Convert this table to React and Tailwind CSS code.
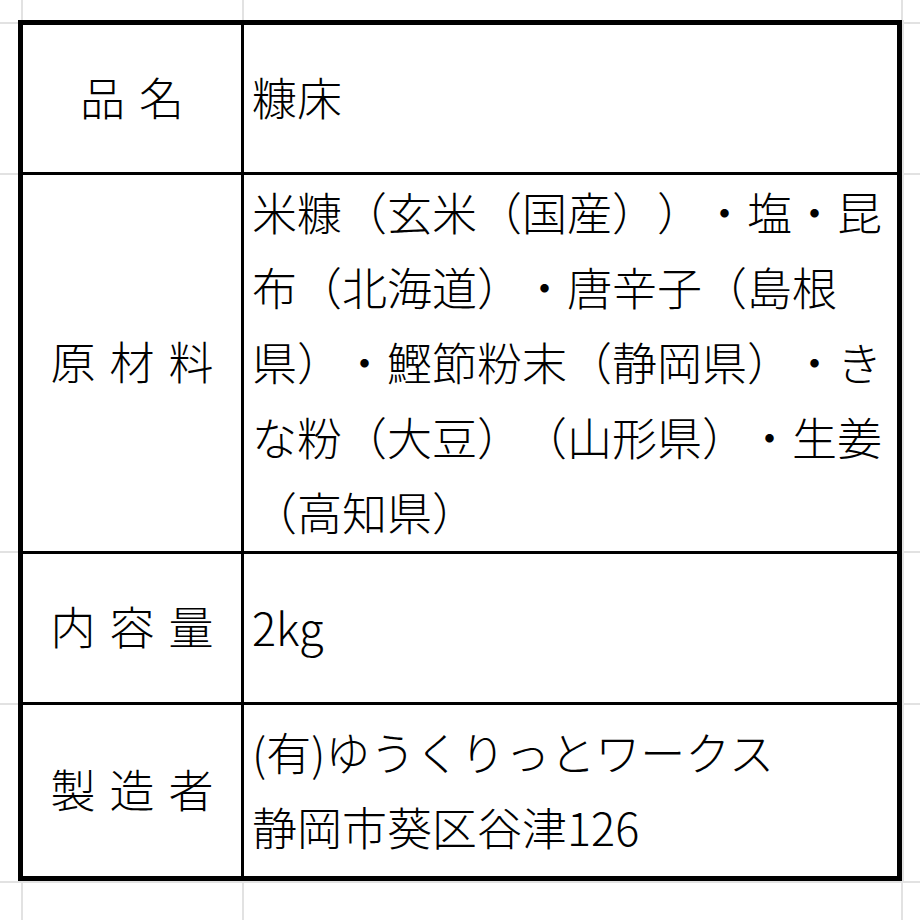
const grid = "border-[#e2e2e2]";

/* ---------- spreadsheet gridlines around the table ---------- */
const ColStrip = () => (
  <div className="flex h-full">
    <div className={`w-[23px] shrink-0 border-r-2 ${grid}`} />
    <div className={`w-[221px] shrink-0 border-r-2 ${grid}`} />
    <div className={`w-[659px] shrink-0 border-r-2 ${grid}`} />
    <div className="flex-1" />
  </div>
);

const RowStrip = ({ className = "" }) => (
  <div className={`flex flex-col h-full ${className}`}>
    <div className={`h-[4px] shrink-0 border-b-2 ${grid}`} />
    <div className={`h-[151px] shrink-0 border-b-2 ${grid}`} />
    <div className={`h-[378px] shrink-0 border-b-2 ${grid}`} />
    <div className={`h-[152px] shrink-0 border-b-2 ${grid}`} />
    <div className="flex-1" />
  </div>
);

/* ---------- table cells ---------- */
const Label = ({ text }) => (
  <div className="bg-white flex items-center justify-center gap-[14px] pb-[4px]">
    {text.split("").map((c, i) => (
      <span key={i}>{c}</span>
    ))}
  </div>
);

const Value = ({ children }) => (
  <div className="bg-white flex items-center pl-[8px] pr-[8px] pb-[4px]">
    <div className="leading-[75px]">{children}</div>
  </div>
);

export default function App() {
  return (
    <div
      lang="ja"
      className="w-[920px] h-[920px] bg-white overflow-hidden grid grid-cols-[18px_884px_18px] grid-rows-[20px_861px_39px] text-black text-[45px] font-light font-['Noto_Sans_CJK_JP','Noto_Sans_CJK_SC',sans-serif] [text-spacing-trim:space-all]"
    >
      <div className="col-span-3">
        <ColStrip />
      </div>

      <RowStrip />

      <div className="grid grid-cols-[218px_653px] grid-rows-[147px_376px_148px_171px] gap-[3px] bg-black border-[5px] border-black">
        <Label text="品名" />
        <Value>糠床</Value>

        <Label text="原材料" />
        <Value>
          米糠（玄米（国産））・塩・昆布（北海道）・唐辛子（島根県）・鰹節粉末（静岡県）・きな粉（大豆）（山形県）・生姜（高知県）
        </Value>

        <Label text="内容量" />
        <Value>2kg</Value>

        <Label text="製造者" />
        <Value>
          (有)ゆうくりっとワークス
          <br />
          静岡市葵区谷津126
        </Value>
      </div>

      <RowStrip className={`border-l-2 ${grid}`} />

      <div className={`col-span-3 border-t-2 ${grid}`}>
        <ColStrip />
      </div>
    </div>
  );
}
